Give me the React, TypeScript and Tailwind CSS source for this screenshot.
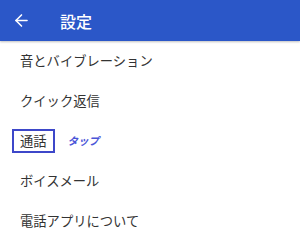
import { ArrowLeft } from "lucide-react";

const items = ["音とバイブレーション", "クイック返信", "通話", "ボイスメール", "電話アプリについて"];

export default function App() {
  return (
    <div
      className="w-[300px] h-[236px] overflow-hidden bg-white"
      style={{ fontFamily: '"Noto Sans CJK JP", "Noto Sans", sans-serif' }}
    >
      <header className="relative z-10 flex h-[41px] items-center bg-[#2b57c8] shadow-[0_1px_2px_rgba(0,0,0,0.25)]">
        <ArrowLeft className="ml-[12px] h-[19px] w-[19px] text-white" strokeWidth={2} />
        <h1 className="ml-[29px] text-[16px] font-medium leading-none text-white">設定</h1>
      </header>
      <ul>
        {items.map((item) => (
          <li key={item} className="flex h-[40px] items-center pl-[20px] text-[13.3px] text-[#333]">
            {item === "通話" ? (
              <>
                <span className="-ml-[8px] border-2 border-[#3d47c9] px-[6px] py-[1px] leading-[18px]">{item}</span>
                <span className="ml-[13px] text-[10.5px] font-bold italic text-[#4a55d8]">タップ</span>
              </>
            ) : (
              <span>{item}</span>
            )}
          </li>
        ))}
      </ul>
    </div>
  );
}
